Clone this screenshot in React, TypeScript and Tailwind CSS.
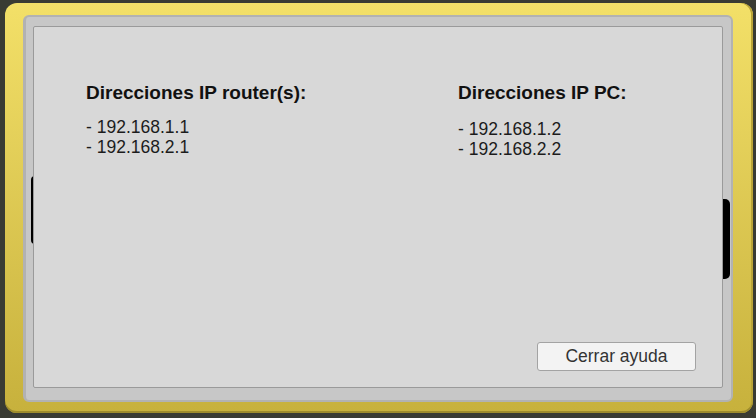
import React from "react";

export default function App() {
  const font = { fontFamily: '"Liberation Sans", Arial, sans-serif' };
  return (
    <div
      className="relative w-[756px] h-[418px] overflow-hidden bg-[#393b33] pt-[3px] pl-[5px] pr-[3px] pb-[5px]"
      style={font}
    >
      <div className="h-full w-full rounded-[12px] bg-gradient-to-b from-[#f3e068] to-[#c7b13c] pt-[12px] pl-[18px] pr-[20px] pb-[11px] shadow-[inset_0_-2px_0_#9e8c2c,inset_-2px_0_0_#b9a437]">
        <div className="h-full w-full rounded-[6px] bg-[#c7c7c7] border-l-[3px] border-t-[2px] border-b-[2px] border-r-[2px] border-[#b2b2b2] pt-[9px] pl-[7px] pr-[8px] pb-[12px]">
          <div className="relative z-10 h-full w-full rounded-[2px] border border-[#9a9a9a] bg-[#d8d8d8] flex flex-col">
            <div className="grid grid-cols-[424px_1fr] pt-[56px]">
              <div className="pl-[52px]">
                <div className="text-[19px] leading-[20px] font-bold text-[#111]">
                  Direcciones IP router(s):
                </div>
                <div className="mt-[14px] text-[17.5px] leading-[20px] text-[#1c1c1c]">
                  <div>- 192.168.1.1</div>
                  <div>- 192.168.2.1</div>
                </div>
              </div>
              <div>
                <div className="text-[19px] leading-[20px] font-bold text-[#111]">
                  Direcciones IP PC:
                </div>
                <div className="mt-[16px] text-[17.5px] leading-[20px] text-[#1c1c1c]">
                  <div>- 192.168.1.2</div>
                  <div>- 192.168.2.2</div>
                </div>
              </div>
            </div>
            <div className="mt-auto flex justify-end pr-[26px] pb-[16px]">
              <button className="w-[159px] h-[29px] rounded-[3px] border border-[#a3a3a3] bg-[#f3f3f3] text-[17.5px] text-[#333] leading-none">
                Cerrar ayuda
              </button>
            </div>
          </div>
        </div>
      </div>
      <div className="absolute left-[31px] top-[176px] w-[6px] h-[68px] rounded-l-[4px] bg-black" />
      <div className="absolute left-[720px] top-[199px] w-[10px] h-[80px] rounded-r-[5px] bg-black" />
    </div>
  );
}
